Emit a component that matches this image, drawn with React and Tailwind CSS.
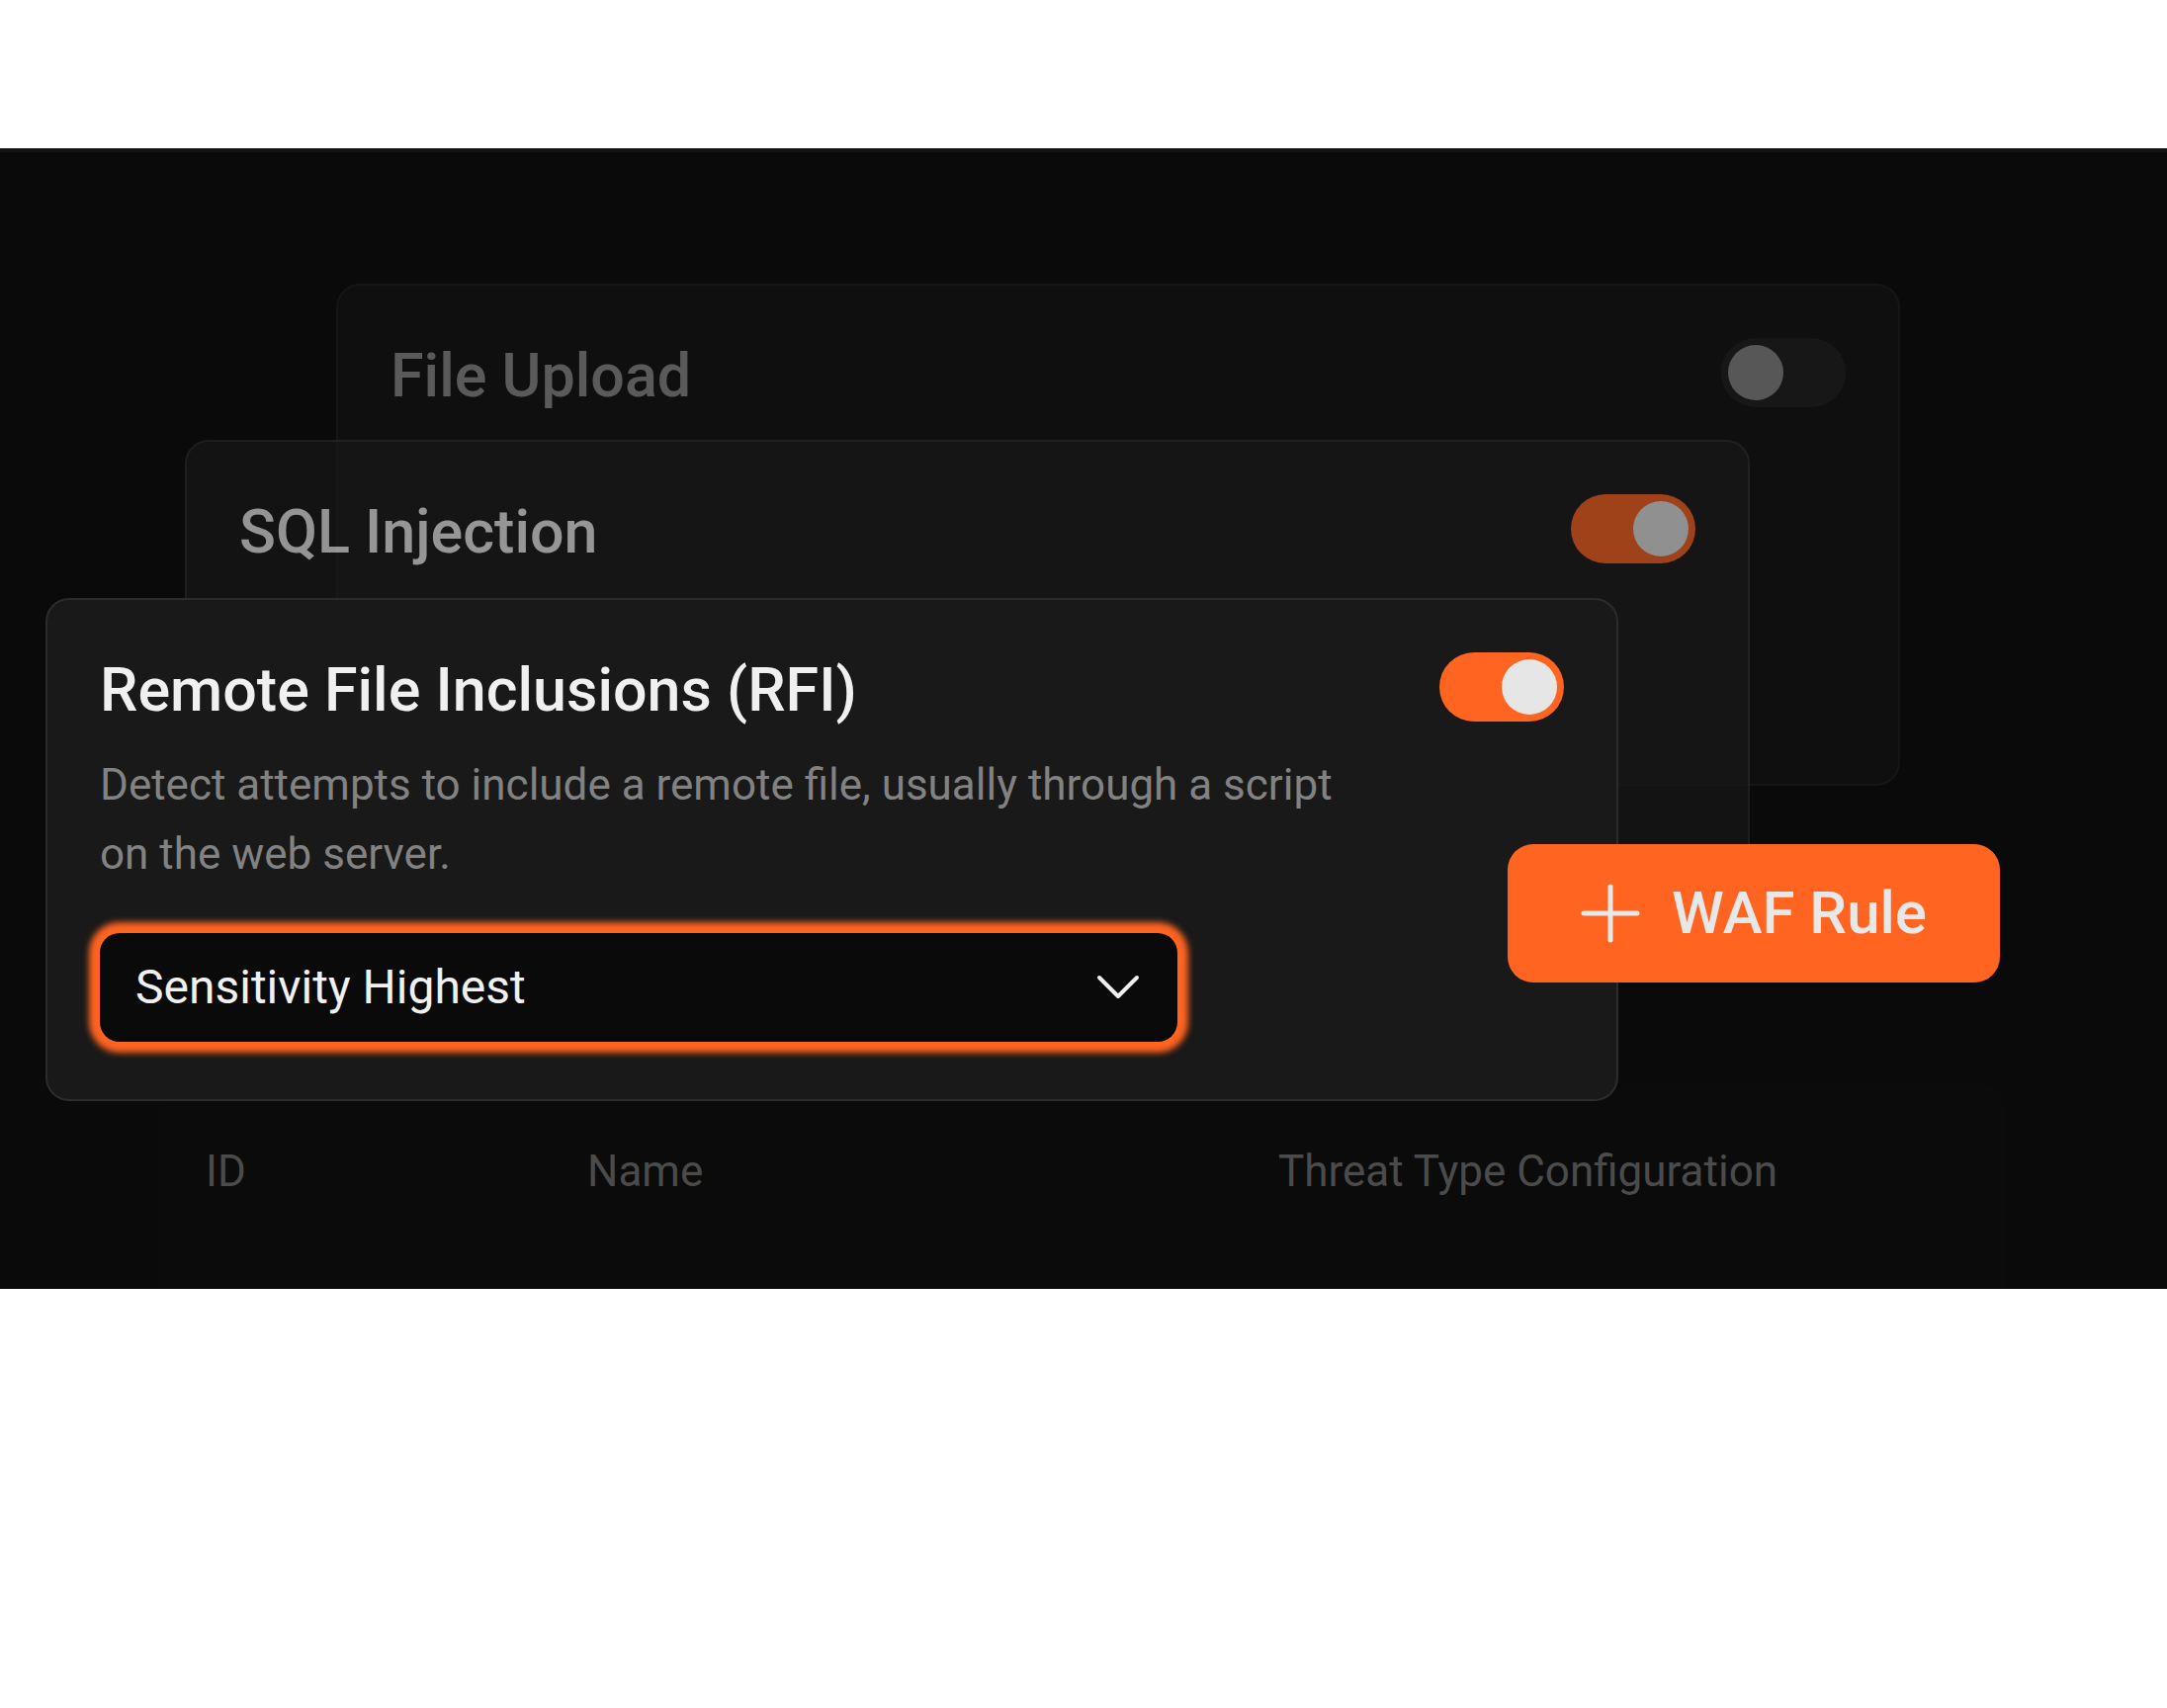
import React from 'react';

const Toggle = ({ on }) => (
  <div
    className={`flex h-[70px] w-[126px] shrink-0 items-center rounded-full p-[7px] ${
      on ? 'justify-end bg-[#ff6421]' : 'justify-start bg-[#303030]'
    }`}
  >
    <div className="h-[56px] w-[56px] rounded-full bg-[#e6e6e6]" />
  </div>
);

const PlusIcon = () => (
  <svg width="60" height="60" viewBox="0 0 60 60" fill="none" stroke="#e8e8e8" strokeWidth="5" strokeLinecap="round">
    <path d="M30 3v54M3 30h54" />
  </svg>
);

const ChevronDown = () => (
  <svg width="44" height="26" viewBox="0 0 44 26" fill="none" stroke="#f0f0f0" strokeWidth="4" strokeLinecap="round" strokeLinejoin="round">
    <path d="M3 3l19 19L41 3" />
  </svg>
);

// card header shared by the stacked cards
const CardHeader = ({ title, on }) => (
  <div className="flex h-[70px] items-center justify-between">
    <h2 className="mt-[6px] text-[61px] font-medium leading-[70px] text-[#f0f0f0]">{title}</h2>
    <Toggle on={on} />
  </div>
);

export default function App() {
  return (
    <div className="min-h-[1728px] bg-white font-[Roboto,sans-serif]">
      <div className="h-[150px]" />
      <section className="h-[1154px] overflow-hidden border-t-4 border-[#131313] bg-[#0a0a0a]">
        <div className="grid">
          {/* table behind the cards */}
          <div className="relative z-0 col-start-1 row-start-1 ml-[161px] mt-[941px] h-[300px] w-[1866px] rounded-[26px] bg-[#0b0b0b]">
            <div className="grid grid-cols-[386px_699px_1fr] pl-[47px] pt-[64px] text-[44px] leading-[52px] text-[#4b4b4b]">
              <span>ID</span>
              <span>Name</span>
              <span>Threat Type Configuration</span>
            </div>
          </div>

          {/* back cards */}
          <div className="relative z-10 col-start-1 row-start-1 ml-[340px] mt-[133px] h-[508px] w-[1582px] rounded-[24px] border-2 border-[#2c2c2c] bg-[#191919] px-[53px] pt-[53px] opacity-35">
            <CardHeader title="File Upload" on={false} />
          </div>
          <div className="relative z-20 col-start-1 row-start-1 ml-[187px] mt-[291px] h-[508px] w-[1583px] rounded-[24px] border-2 border-[#2c2c2c] bg-[#191919] px-[53px] pt-[53px] opacity-60">
            <CardHeader title="SQL Injection" on />
          </div>

          {/* front card */}
          <div className="relative z-30 col-start-1 row-start-1 ml-[46px] mt-[451px] h-[509px] w-[1591px] rounded-[24px] border-2 border-[#2c2c2c] bg-[#191919] px-[53px] pt-[53px]">
            <CardHeader title="Remote File Inclusions (RFI)" on />
            <p className="mt-[29px] max-w-[1270px] text-[44px] leading-[70px] text-[#828282]">
              Detect attempts to include a remote file, usually through a script on the web server.
            </p>
            <button className="mt-[45px] flex h-[110px] w-[1090px] items-center justify-between rounded-[20px] bg-[#0a0a0a] pl-[36px] pr-[38px] shadow-[0_0_6px_11px_#ff6421]">
              <span className="text-[48px] leading-none text-[#f0f0f0]">Sensitivity Highest</span>
              <ChevronDown />
            </button>
          </div>

          <button className="relative z-40 col-start-1 row-start-1 ml-[1525px] mt-[700px] flex h-[140px] w-[498px] items-center justify-center gap-[32px] self-start rounded-[26px] bg-[#ff6421]">
            <PlusIcon />
            <span className="text-[60px] font-medium leading-none text-[#e8e8e8]">WAF Rule</span>
          </button>
        </div>
      </section>
    </div>
  );
}
